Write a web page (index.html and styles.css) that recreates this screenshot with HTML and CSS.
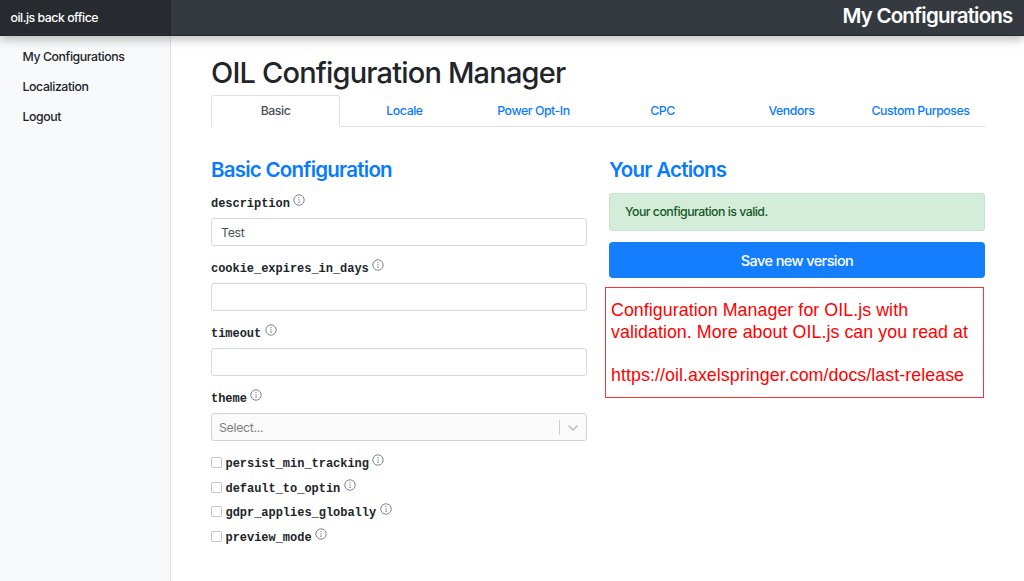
FILE: index.html
```html
<!DOCTYPE html>
<html lang="en">
<head>
<meta charset="utf-8">
<title>OIL Configuration Manager</title>
<link rel="stylesheet" href="styles.css">
</head>
<body>
<svg class="sprite" aria-hidden="true">
  <symbol id="info" viewBox="0 0 12 12">
    <circle cx="6" cy="6" r="5.2" fill="none" stroke="currentColor" stroke-width=".9"/>
    <path d="M5.3 5.2H6.1V8.3M5.1 8.4H7.1" fill="none" stroke="currentColor" stroke-width=".6"/>
    <circle cx="6" cy="3.6" r=".55" fill="currentColor"/>
  </symbol>
</svg>
<header class="topbar">
  <div class="brand">oil.js back office</div>
  <div class="page-name">My Configurations</div>
</header>
<div class="shell">
  <nav class="sidebar">
    <a>My Configurations</a>
    <a>Localization</a>
    <a>Logout</a>
  </nav>
  <main class="content">
    <h1>OIL Configuration Manager</h1>
    <div class="tabs">
      <a class="tab active">Basic</a>
      <a class="tab">Locale</a>
      <a class="tab">Power Opt-In</a>
      <a class="tab">CPC</a>
      <a class="tab">Vendors</a>
      <a class="tab">Custom Purposes</a>
    </div>
    <div class="columns">
      <section class="column">
        <h2>Basic Configuration</h2>
        <div class="field"><label class="name">description<svg class="info"><use href="#info"/></svg></label><div class="control">Test</div></div>
        <div class="field"><label class="name">cookie_expires_in_days<svg class="info"><use href="#info"/></svg></label><div class="control"></div></div>
        <div class="field"><label class="name">timeout<svg class="info"><use href="#info"/></svg></label><div class="control"></div></div>
        <div class="field"><label class="name">theme<svg class="info"><use href="#info"/></svg></label>
          <div class="control select"><span class="placeholder">Select...</span><span class="divider"></span>
            <svg class="chevron" viewBox="0 0 12 8"><path d="M2 2L6 6L10 2" fill="none" stroke="currentColor" stroke-width="1.4" stroke-linecap="round" stroke-linejoin="round"/></svg></div></div>
        <div class="checks">
          <label class="name check"><span class="box"></span>persist_min_tracking<svg class="info"><use href="#info"/></svg></label>
          <label class="name check"><span class="box"></span>default_to_optin<svg class="info"><use href="#info"/></svg></label>
          <label class="name check"><span class="box"></span>gdpr_applies_globally<svg class="info"><use href="#info"/></svg></label>
          <label class="name check"><span class="box"></span>preview_mode<svg class="info"><use href="#info"/></svg></label>
        </div>
      </section>
      <section class="column">
        <h2>Your Actions</h2>
        <div class="alert">Your configuration is valid.</div>
        <button class="save">Save new version</button>
        <div class="note"><p>Configuration Manager for OIL.js with<br>validation. More about OIL.js can you read at</p><p>https://oil.axelspringer.com/docs/last-release</p></div>
      </section>
    </div>
  </main>
</div>
</body>
</html>
```
FILE: styles.css
```css
* { box-sizing: border-box; }
body {
  margin: 0;
  height: 581px;
  display: flex;
  flex-direction: column;
  overflow: hidden;
  background: #fff;
  color: #212529;
  font: 12.3px/18px Inter, "Liberation Sans", sans-serif;
  letter-spacing: -0.4px;
}
.sprite { position: absolute; width: 0; height: 0; }
.topbar {
  position: relative;
  display: flex;
  flex: none;
  height: 36px;
  background: #343a40;
  border-bottom: 1px solid #24282c;
  color: #fff;
  box-shadow: 0 4px 9px rgba(0, 0, 0, .24);
}
.brand {
  width: 171px;
  padding: 9px 0 0 10.5px;
  background: #272b30;
  border-right: 1px solid #22262a;
  font-weight: 550;
  letter-spacing: -0.47px;
  white-space: nowrap;
}
.page-name {
  flex: 1;
  padding: 3px 11.5px 0 0;
  text-align: right;
  font-size: 20.5px;
  font-weight: 600;
  line-height: 26px;
  letter-spacing: -0.82px;
}
.shell { flex: 1; display: flex; }
.sidebar {
  width: 171px;
  padding: 12px 0 0 22.5px;
  display: flex;
  flex-direction: column;
  gap: 12px;
  background: #f8f9fb;
  border-right: 1px solid #e1e2e4;
  font-weight: 500;
}
.content { flex: 1; padding: 18px 39px 0 40px; }
h1, h2, p { margin: 0; }
h1 {
  height: 41px;
  font-size: 29px;
  line-height: 37px;
  font-weight: 550;
  letter-spacing: -0.82px;
  white-space: nowrap;
}
.tabs {
  display: grid;
  grid-template-columns: repeat(6, 1fr);
  height: 32px;
  border-bottom: 1px solid #dee2e6;
  font-weight: 450;
  letter-spacing: -0.43px;
}
.tab {
  height: 32px;
  padding-top: 7px;
  text-align: center;
  color: #087bff;
}
.tab.active {
  color: #495057;
  background: #fff;
  border: 1px solid #dee2e6;
  border-bottom: 0;
  border-radius: 3px 3px 0 0;
  padding-top: 6px;
}
.columns {
  display: grid;
  grid-template-columns: 1fr 1fr;
  column-gap: 22px;
  padding-top: 30px;
}
h2 {
  height: 36px;
  color: #087bff;
  font-size: 20.5px;
  line-height: 26px;
  font-weight: 600;
  letter-spacing: -0.76px;
}
.field { height: 65px; }
.name {
  display: flex;
  align-items: flex-start;
  height: 25px;
  font: bold 12px/22px "Liberation Mono", monospace;
  letter-spacing: -0.03px;
}
.info { width: 12px; height: 12px; margin: 1px 0 0 3.5px; color: #70757a; }
.control {
  height: 28px;
  padding: 5px 9px 0;
  border: 1px solid #d5d9de;
  border-radius: 3px;
  color: #495057;
  letter-spacing: -0.3px;
}
.select {
  display: flex;
  align-items: center;
  padding: 1px 7px 0;
  background: #fafafa;
  border-color: #d3d3d3;
  color: #808080;
}
.placeholder { flex: 1; }
.divider { width: 1px; height: 15px; background: #ccc; }
.chevron { width: 12px; height: 8px; margin-left: 7px; color: #bbb; }
.check { height: 24.7px; }
.box {
  width: 11px;
  height: 11px;
  margin: 4px 3.5px 0 0;
  border: 1px solid #c4c4c4;
  border-radius: 2px;
}
.alert {
  height: 38px;
  padding: 9px 15px;
  background: #d4edda;
  border: 1px solid #c3e6cb;
  border-radius: 3px;
  color: #155724;
  font-weight: 450;
  letter-spacing: -0.5px;
}
.save {
  display: block;
  width: 100%;
  height: 36px;
  margin-top: 11px;
  padding: 0;
  border: 0;
  border-radius: 4px;
  background: #147eff;
  color: #fff;
  font: 550 14.5px/37px Inter, sans-serif;
  letter-spacing: -0.58px;
}
.note {
  width: 379px;
  height: 111px;
  margin: 9px 0 0 -4px;
  padding: 12px 5px;
  border: 1px solid #f33;
  color: #f00;
  font: 17.8px/21.5px "Liberation Sans", Arial, sans-serif;
  letter-spacing: 0.07px;
  white-space: nowrap;
}
.note p + p { margin-top: 21.5px; }
```
